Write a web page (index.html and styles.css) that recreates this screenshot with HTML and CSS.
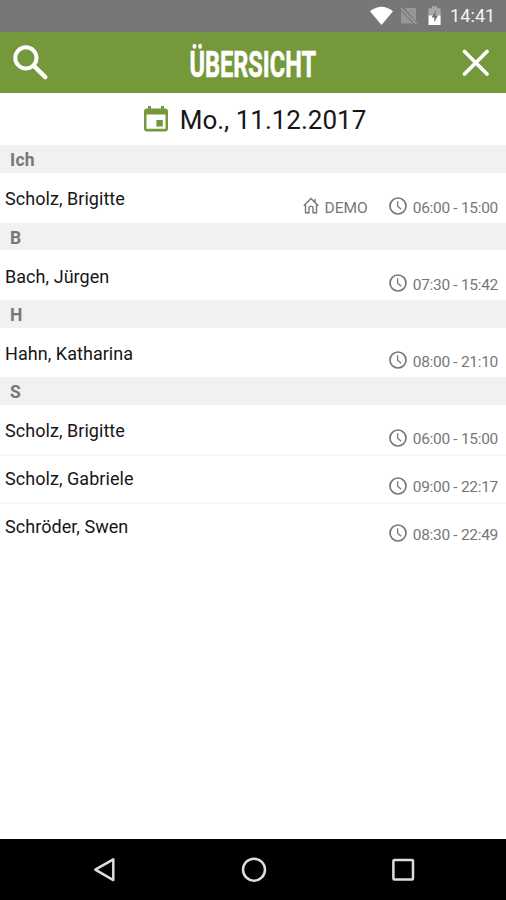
FILE: index.html
```html
<!DOCTYPE html>
<html lang="de">
<head>
<meta charset="utf-8">
<title>Übersicht</title>
<link rel="stylesheet" href="styles.css">
</head>
<body>
<svg class="defs" aria-hidden="true">
  <symbol id="clock" viewBox="0 0 18 18"><circle cx="9" cy="9" r="8" stroke-width="1.7"/><path d="M8.6 4.2V9.3L12.2 12.2" stroke-width="1.3"/></symbol>
  <symbol id="home" viewBox="0 0 16 17"><path d="M0.8 8.8 8 1.6 15.2 8.8M2.5 7.4V15.8H6V10.8Q6 9.4 7.2 9.4H8.8Q10 9.4 10 10.8V15.8H13.5V7.4M12 2V5.4" stroke-width="1.4"/></symbol>
</svg>
<div class="status">
  <svg class="status-icons" viewBox="0 0 76 32">
    <path d="M0 11.3Q11.5 2.2 23 11.3L11.5 25Z" fill="#fff"/>
    <path d="M34.5 8H46V21.5ZM31 11V23.5H43.5Z" fill="#969696"/>
    <path d="M31 8.3 46.5 24" stroke="#a4a4a4" stroke-width="1.3"/>
    <path d="M59 8.3H62V6.3H67V8.3H70.6V16H58.5V8.3Z" fill="#a8a8a8"/>
    <path d="M58.5 15.5H70.6V25H58.5Z" fill="#fff"/>
    <path d="M66 10 61.5 17.5H64.3V22.3L68 15.6H65.4Z" fill="#707070"/>
  </svg>
  <span class="time">14:41</span>
</div>
<header class="bar">
  <svg class="search" viewBox="0 0 36 36"><circle cx="12.9" cy="12.9" r="10.6" fill="none" stroke="#fff" stroke-width="4"/><path d="M21 21 32.3 32.2" stroke="#fff" stroke-width="4.5" stroke-linecap="round"/></svg>
  <h1><span>ÜBERSICHT</span></h1>
  <svg class="close" viewBox="0 0 28 28"><path d="M2.5 2.5 25 25M25 2.5 2.5 25" stroke="#fff" stroke-width="3.7" stroke-linecap="round"/></svg>
</header>
<div class="date">
  <svg class="calendar" viewBox="0 0 24 26"><path fill="#74983a" fill-rule="evenodd" d="M4 0H7V2.5H17V0H20V2.5H21Q24 2.5 24 5.5V22.5Q24 25.5 21 25.5H3Q0 25.5 0 22.5V5.5Q0 2.5 3 2.5H4ZM2.5 8.5V22.8H21.5V8.5Z"/><path fill="#74983a" d="M12.4 14H18.8V20.6H12.4Z"/></svg>
  <span>Mo., 11.12.2017</span>
</div>
<main>
  <h2>Ich</h2>
  <div class="row"><span class="name">Scholz, Brigitte</span><span class="place"><svg class="home"><use href="#home"/></svg><span>DEMO</span></span><span class="hours"><svg class="clock"><use href="#clock"/></svg><span>06:00 - 15:00</span></span></div>
  <h2>B</h2>
  <div class="row"><span class="name">Bach, Jürgen</span><span class="hours"><svg class="clock"><use href="#clock"/></svg><span>07:30 - 15:42</span></span></div>
  <h2>H</h2>
  <div class="row"><span class="name">Hahn, Katharina</span><span class="hours"><svg class="clock"><use href="#clock"/></svg><span>08:00 - 21:10</span></span></div>
  <h2>S</h2>
  <div class="row"><span class="name">Scholz, Brigitte</span><span class="hours"><svg class="clock"><use href="#clock"/></svg><span>06:00 - 15:00</span></span></div>
  <div class="row next"><span class="name">Scholz, Gabriele</span><span class="hours"><svg class="clock"><use href="#clock"/></svg><span>09:00 - 22:17</span></span></div>
  <div class="row next"><span class="name">Schröder, Swen</span><span class="hours"><svg class="clock"><use href="#clock"/></svg><span>08:30 - 22:49</span></span></div>
</main>
<nav>
  <svg viewBox="0 0 26 26"><path d="M4.3 12.7 22.3 2.3V23.1Z"/></svg>
  <svg viewBox="0 0 26 26"><circle cx="13" cy="12.7" r="11"/></svg>
  <svg viewBox="0 0 26 26"><rect x="3.4" y="3" width="19.6" height="19.6" rx="1"/></svg>
</nav>
</body>
</html>
```

FILE: styles.css
```css
* { box-sizing: border-box; }
body {
  margin: 0;
  width: 506px;
  height: 900px;
  display: flex;
  flex-direction: column;
  overflow: hidden;
  background: #fff;
  color: #161616;
  font-family: Roboto, "Liberation Sans", sans-serif;
}
svg { display: block; flex: none; }
.defs { width: 0; height: 0; position: absolute; }
.status {
  height: 32px;
  flex: none;
  background: #777;
  display: flex;
  justify-content: flex-end;
  align-items: center;
  padding-right: 10px;
  gap: 4px;
}
.status-icons { width: 76px; height: 32px; }
.time { color: #f4f4f4; font-size: 18px; line-height: 32px; width: 46px; white-space: nowrap; letter-spacing: 0.1px; }
.bar {
  height: 61px;
  flex: none;
  background: #74983a;
  display: flex;
  justify-content: space-between;
  align-items: center;
  padding: 0 16px 0 13px;
}
.search { width: 36px; height: 36px; }
h1 {
  margin: 0 5px 0 0;
  padding-top: 4px;
  width: 240px;
  display: flex;
  justify-content: center;
  color: #fff;
  font-size: 37.5px;
  font-weight: 700;
  line-height: 57px;
}
h1 span { transform: scaleX(0.628); -webkit-text-stroke: 0.6px #fff; }
.close { width: 28px; height: 28px; }
.date {
  height: 52.4px;
  flex: none;
  display: flex;
  justify-content: center;
  align-items: center;
  gap: 12px;
  padding-left: 4px;
  font-size: 26px;
  line-height: 53px;
}
.date span { padding-top: 2px; }
.calendar { width: 24px; height: 26px; }
main { flex: 1; }
h2 {
  margin: 0;
  height: 27.8px;
  padding-left: 10px;
  background: #f1f1f1;
  color: #777;
  font-size: 17.5px;
  font-weight: 700;
  line-height: 30.4px;
  letter-spacing: 0.3px;
}
.row {
  height: 49.4px;
  display: flex;
  align-items: flex-start;
  padding: 0 8px 0 5px;
  line-height: 20px;
}
.row.next { height: 47.7px; border-top: 2px solid #f7f7f7; }
.name { flex: 1; font-size: 18px; letter-spacing: 0.05px; padding-top: 16.2px; }
.next .name { padding-top: 13px; }
.place, .hours { display: flex; align-items: center; color: #777; font-size: 15.5px; padding-top: 24.4px; }
.next .hours { padding-top: 21px; }
.hours { gap: 6px; margin-left: 21px; letter-spacing: -0.3px; }
.place { gap: 6px; }
.clock { width: 18px; height: 18px; margin-top: -3px; }
.home { width: 16px; height: 17px; margin-top: -4px; }
symbol { fill: none; stroke: #777; }
nav {
  height: 61px;
  flex: none;
  background: #000;
  display: flex;
  justify-content: space-between;
  align-items: center;
  padding: 0 90px 0 91px;
}
nav svg { width: 26px; height: 26px; fill: none; stroke: #ddd; stroke-width: 2.5; stroke-linejoin: round; }
```
